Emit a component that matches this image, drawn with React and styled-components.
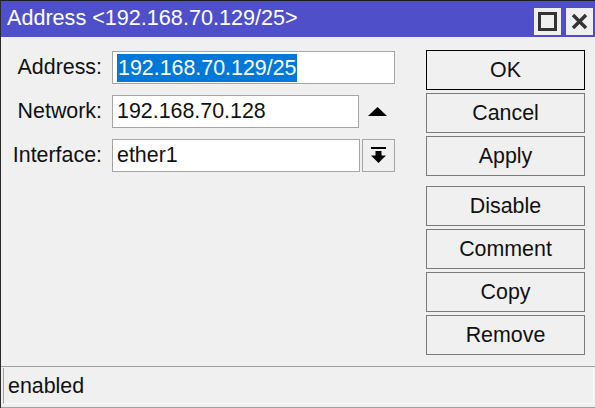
import React from 'react';
import styled, { createGlobalStyle } from 'styled-components';

const Global = createGlobalStyle`
  html, body { margin: 0; padding: 0; background: #f0f0f0; }
  body { font-family: "Liberation Sans", Arial, sans-serif; }
`;

const Window = styled.div`
  width: 595px;
  height: 408px;
  box-sizing: border-box;
  border-top: 1px solid #1e1e1e;
  border-left: 1px solid #2a2a2a;
  background: #f0f0f0;
  display: flex;
  flex-direction: column;
  overflow: hidden;
`;

const TitleBar = styled.div`
  height: 36px;
  flex: none;
  background: #4f50c9;
  color: #fff;
  display: flex;
  align-items: center;
  padding-left: 6px;
  font-size: 21.6px;
`;

const TitleText = styled.div`
  flex: 1;
  white-space: nowrap;
  padding-bottom: 2px;
`;

const TitleButtons = styled.div`
  display: flex;
  gap: 3px;
  align-self: flex-end;
  margin-bottom: 1px;
  margin-right: 1px;
`;

const TitleButton = styled.div`
  width: 29px;
  height: 29px;
  box-sizing: border-box;
  background: #efefef;
  border: 1px solid #5a5a5a;
  display: flex;
  align-items: center;
  justify-content: center;
`;

const Body = styled.div`
  flex: 1;
  display: flex;
  padding: 13px 10px 0 0;
`;

const Form = styled.div`
  width: 394px;
  display: grid;
  grid-template-columns: 101px 1fr;
  column-gap: 10px;
  row-gap: 11px;
  align-content: start;
  padding-top: 1px;
`;

const Label = styled.div`
  font-size: 21.4px;
  color: #111;
  text-align: right;
  line-height: 33px;
`;

const FieldRow = styled.div`
  display: flex;
  align-items: stretch;
  height: 33px;
`;

const Input = styled.div`
  flex: 1;
  box-sizing: border-box;
  height: 33px;
  background: #fff;
  border: 1px solid #a5a5a5;
  font-size: 21.4px;
  color: #111;
  padding-left: 4px;
  display: flex;
  align-items: center;
  white-space: nowrap;
  overflow: hidden;
`;

const Selected = styled.span`
  background: #0078d7;
  color: #fff;
  line-height: 28px;
  padding: 0 1px;
`;

const IconSlot = styled.div`
  width: 36px;
  display: flex;
  align-items: center;
  justify-content: center;
`;

const DropButton = styled.div`
  width: 33px;
  margin-left: 2px;
  box-sizing: border-box;
  border: 1px solid #a5a5a5;
  background: #f0f0f0;
  display: flex;
  align-items: center;
  justify-content: center;
`;

const Actions = styled.div`
  margin-left: auto;
  width: 159px;
  display: flex;
  flex-direction: column;
`;

const Group = styled.div`
  display: flex;
  flex-direction: column;
  gap: 3px;
  margin-bottom: 10px;
`;

const Button = styled.div`
  height: 40px;
  box-sizing: border-box;
  border: 1px solid ${p => (p.$primary ? '#000' : '#7a7a7a')};
  background: #f0f0f0;
  font-size: 21.4px;
  color: #111;
  display: flex;
  align-items: center;
  justify-content: center;
`;

const StatusBar = styled.div`
  height: 42px;
  flex: none;
  box-sizing: border-box;
  border-top: 1px solid #a0a0a0;
  border-bottom: 1px solid #a0a0a0;
  padding: 1px 1px 0 2px;
`;

const StatusField = styled.div`
  height: 35px;
  border-left: 1px solid #a0a0a0;
  border-right: 1px solid #fafafa;
  border-bottom: 1px solid #fafafa;
  padding-left: 4px;
  font-size: 21.4px;
  color: #111;
  line-height: 36px;
`;

const MaxIcon = () => (
  <svg width="19" height="19" viewBox="0 0 19 19">
    <rect x="1.5" y="1.5" width="16" height="16" fill="none" stroke="#333" strokeWidth="3" />
  </svg>
);

const CloseIcon = () => (
  <svg width="19" height="19" viewBox="0 0 19 19">
    <path d="M3 3 L16 16 M16 3 L3 16" stroke="#333" strokeWidth="3.4" />
  </svg>
);

const UpTriangle = () => (
  <svg width="19" height="9" viewBox="0 0 19 9">
    <path d="M9.5 0 L19 9 L0 9 Z" fill="#000" />
  </svg>
);

const DropIcon = () => (
  <svg width="15" height="17" viewBox="0 0 15 17">
    <rect x="0" y="0" width="15" height="2" fill="#000" />
    <rect x="4.5" y="4" width="6" height="5" fill="#000" />
    <path d="M0 8.5 L15 8.5 L7.5 16 Z" fill="#000" />
  </svg>
);

export default function App() {
  return (
    <>
      <Global />
      <Window>
        <TitleBar>
          <TitleText>Address &lt;192.168.70.129/25&gt;</TitleText>
          <TitleButtons>
            <TitleButton><MaxIcon /></TitleButton>
            <TitleButton><CloseIcon /></TitleButton>
          </TitleButtons>
        </TitleBar>
        <Body>
          <Form>
            <Label>Address:</Label>
            <FieldRow>
              <Input><Selected>192.168.70.129/25</Selected></Input>
            </FieldRow>
            <Label>Network:</Label>
            <FieldRow>
              <Input>192.168.70.128</Input>
              <IconSlot><UpTriangle /></IconSlot>
            </FieldRow>
            <Label>Interface:</Label>
            <FieldRow>
              <Input>ether1</Input>
              <DropButton><DropIcon /></DropButton>
            </FieldRow>
          </Form>
          <Actions>
            <Group>
              <Button $primary>OK</Button>
              <Button>Cancel</Button>
              <Button>Apply</Button>
            </Group>
            <Group>
              <Button>Disable</Button>
              <Button>Comment</Button>
              <Button>Copy</Button>
              <Button>Remove</Button>
            </Group>
          </Actions>
        </Body>
        <StatusBar>
          <StatusField>enabled</StatusField>
        </StatusBar>
      </Window>
    </>
  );
}
